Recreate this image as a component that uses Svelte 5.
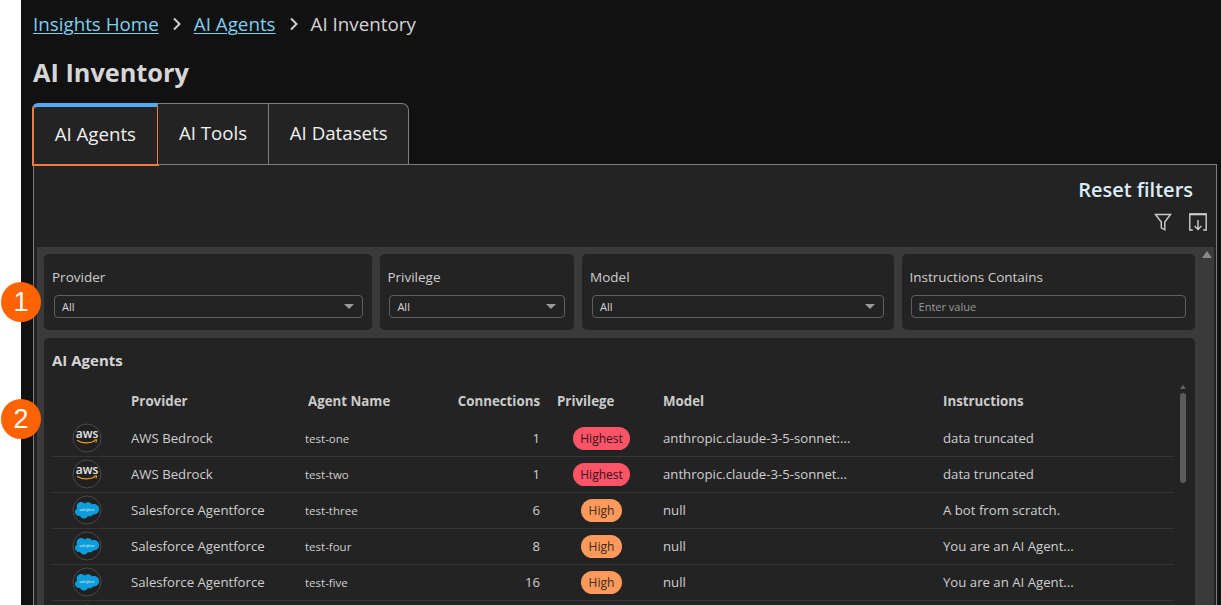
<script>
  const filters = [
    { label: 'Provider', value: 'All', cls: 'f1' },
    { label: 'Privilege', value: 'All', cls: 'f2' },
    { label: 'Model', value: 'All', cls: 'f3' }
  ];
  const rows = [
    { logo: 'aws', provider: 'AWS Bedrock', name: 'test-one', conn: 1, priv: 'Highest', model: 'anthropic.claude-3-5-sonnet:...', instr: 'data truncated' },
    { logo: 'aws', provider: 'AWS Bedrock', name: 'test-two', conn: 1, priv: 'Highest', model: 'anthropic.claude-3-5-sonnet...', instr: 'data truncated' },
    { logo: 'sf', provider: 'Salesforce Agentforce', name: 'test-three', conn: 6, priv: 'High', model: 'null', instr: 'A bot from scratch.' },
    { logo: 'sf', provider: 'Salesforce Agentforce', name: 'test-four', conn: 8, priv: 'High', model: 'null', instr: 'You are an AI Agent...' },
    { logo: 'sf', provider: 'Salesforce Agentforce', name: 'test-five', conn: 16, priv: 'High', model: 'null', instr: 'You are an AI Agent...' }
  ];
</script>

{#snippet sfLogo(label)}
  <svg viewBox="0 0 30 30" width="30" height="30">
    <circle cx="15" cy="15" r="14" fill="#202020" stroke="#4a4a4a" />
    <path d="M12.8 8.600c.9-.9 2-1.400 3.300-1.400 1.600 0 3.100.9 3.800 2.200.7-.3 1.400-.4 2.100-.4 2.900 0 5.200 2.300 5.200 5.200s-2.300 5.200-5.200 5.200h-1c-.6 1.200-1.900 2-3.300 2-.6 0-1.200-.1-1.700-.4-.7 1.500-2.200 2.600-4 2.600-1.900 0-3.500-1.200-4.100-2.800-.3.100-.6.100-.9.100-2.200 0-4-1.800-4-4 0-1.500.8-2.800 2-3.500-.3-.6-.4-1.200-.4-1.900 0-2.500 2.100-4.500 4.600-4.500 1.500 0 2.700.7 3.600 1.800z" fill="#0d9dda" />
    {#if label}<text x="15" y="15.800" text-anchor="middle" class="sft">salesforce</text>{/if}
  </svg>
{/snippet}

<div class="page">
  <span class="marker m1">1</span>
  <span class="marker m2">2</span>

  <nav class="crumbs">
    <a href="#home">Insights Home</a>
    <svg class="chev" viewBox="0 0 10 14"><path d="M2 1.500 7.500 7 2 12.500" /></svg>
    <a href="#agents">AI Agents</a>
    <svg class="chev" viewBox="0 0 10 14"><path d="M2 1.500 7.500 7 2 12.500" /></svg>
    <span>AI Inventory</span>
  </nav>

  <h1>AI Inventory</h1>

  <div class="tabs">
    <div class="tab active">AI Agents</div>
    <div class="tab t2">AI Tools</div>
    <div class="tab t3">AI Datasets</div>
  </div>

  <section class="panel">
    <div class="reset">Reset filters</div>
    <div class="tools">
      <svg viewBox="0 0 18 18" width="18" height="18" class="tool"><path d="M1.500 1.500h15L10.800 9v7.800L7.300 14.800V9z" /></svg>
      <svg viewBox="0 0 18 18" width="18" height="18" class="tool">
        <path d="M3.800 17H.8V1h16.400v16h-3" />
        <path d="M.8 1.400h16.400" stroke-width="1.800" />
        <path d="M9 7v9.300M5.600 13 9 16.400l3.400-3.400" />
      </svg>
    </div>

    <div class="well">
      <div class="scroll-up"></div>
      <div class="filters">
        {#each filters as f}
          <div class="card filter {f.cls}">
            <div class="flabel">{f.label}</div>
            <div class="select"><span>{f.value}</span><i class="caret"></i></div>
          </div>
        {/each}
        <div class="card filter f4">
          <div class="flabel">Instructions Contains</div>
          <div class="select input">Enter value</div>
        </div>
      </div>

      <div class="card table-card">
        <div class="ttitle">AI Agents</div>
        <div class="table">
          <div class="row head">
            <span></span>
            <span>Provider</span>
            <span class="c-name">Agent Name</span>
            <span class="c-conn">Connections</span>
            <span class="c-priv">Privilege</span>
            <span>Model</span>
            <span>Instructions</span>
          </div>
          {#each rows as r}
            <div class="row body">
              <span class="logo">
                {#if r.logo === 'aws'}
                  <svg viewBox="0 0 30 30" width="30" height="30">
                    <circle cx="15" cy="15" r="14" fill="#202020" stroke="#4a4a4a" />
                    <text x="15" y="15" text-anchor="middle" class="awst">aws</text>
                    <path d="M5 17.200c5.500 3.600 13.500 3.600 18.500.4" fill="none" stroke="#f09a1a" stroke-width="1.200" />
                    <path d="M21.800 17.200l3-.5-.8 2.800" fill="none" stroke="#f09a1a" stroke-width="1" />
                  </svg>
                {:else}
                  {@render sfLogo(true)}
                {/if}
              </span>
              <span>{r.provider}</span>
              <span class="name">{r.name}</span>
              <span class="c-conn">{r.conn}</span>
              <span class="pillcell"><b class={r.priv === 'Highest' ? 'pill highest' : 'pill high'}>{r.priv}</b></span>
              <span>{r.model}</span>
              <span>{r.instr}</span>
            </div>
          {/each}
          <div class="row partial"><span class="logo">{@render sfLogo(false)}</span></div>
          <div class="tscroll"><i class="tup"></i><i class="thumb"></i></div>
        </div>
      </div>
    </div>
  </section>
</div>

<style>
  :global(html), :global(body) {
    margin: 0;
    height: 605px;
    overflow: hidden;
    background: #fff;
  }
  .page {
    position: relative;
    box-sizing: border-box;
    height: 605px;
    margin-left: 21px;
    padding: 0 4px 0 12px;
    background: #111;
    color: #d8d8d8;
    font-family: "Open Sans", "Liberation Sans", sans-serif;
  }
  .marker {
    position: absolute;
    left: -20px;
    width: 40px;
    height: 40px;
    border-radius: 50%;
    background: #ff6200;
    color: #fff;
    font-family: "Liberation Sans", sans-serif;
    font-size: 27px;
    line-height: 41px;
    text-align: center;
    z-index: 5;
  }
  .m1 { top: 282px; }
  .m2 { top: 399px; }

  .crumbs {
    display: flex;
    align-items: center;
    height: 47px;
    font-size: 18.800px;
    color: #d4d4d4;
  }
  .crumbs a { color: #7fd0ee; text-decoration: underline; text-underline-offset: 2px; text-decoration-thickness: 1px; }
  .chev { width: 10px; height: 14px; margin: 0 12px 0 13px; flex: none; }
  .chev path { fill: none; stroke: #cfcfcf; stroke-width: 2; }
  h1 {
    margin: 0;
    height: 56px;
    font-size: 25.300px;
    line-height: 51px;
    font-weight: 700;
    color: #d6d6d6;
  }
  .tabs { display: flex; height: 61px; width: 377px; margin-left: -1px; position: relative; z-index: 2; }
  .tab {
    box-sizing: border-box;
    height: 61px;
    background: #232323;
    border-top: 1px solid #7d7d7d;
    border-right: 1px solid #7d7d7d;
    font-size: 18.700px;
    color: #f0f0f0;
    display: flex;
    align-items: center;
    justify-content: center;
    padding-bottom: 4px;
  }
  .active {
    width: 127px;
    height: 63px;
    border: 2px solid #f47b3f;
    border-top: 4px solid #52a9f0;
    border-top-left-radius: 6px;
    padding-bottom: 5px;
  }
  .t2 { width: 112px; margin-left: -1px; }
  .t3 { width: 140px; border-top-right-radius: 7px; }

  .panel {
    box-sizing: border-box;
    height: 441px;
    background: #232323;
    border: 1px solid #7d7d7d;
    border-bottom: 0;
    padding: 0 2px 0 3px;
    overflow: hidden;
  }
  .reset {
    text-align: right;
    font-size: 20px;
    font-weight: 600;
    color: #dcecf9;
    line-height: 25px;
    padding: 12px 21px 0 0;
    margin-bottom: -1px;
  }
  .tools { display: flex; justify-content: flex-end; gap: 17px; padding: 12px 7px 0 0; height: 33px; }
  .tool { fill: none; stroke: #cdcdcd; stroke-width: 1.400; }
  .well {
    position: relative;
    background: #3a3a3a;
    padding: 7px 19px 0 7px;
    height: 358px;
    margin-top: 1px;
    box-sizing: border-box;
  }
  .scroll-up {
    position: absolute;
    right: 2px;
    top: 4px;
    width: 0;
    height: 0;
    border-left: 5px solid transparent;
    border-right: 5px solid transparent;
    border-bottom: 7px solid #8a8a8a;
  }
  .filters { display: flex; gap: 8px; }
  .card { background: #232323; border-radius: 5px; box-sizing: border-box; }
  .filter { height: 76px; padding: 13px 9px 0 8px; }
  .f1 { width: 329px; }
  .f2 { width: 194px; padding-left: 7px; }
  .f3 { width: 312px; padding-right: 10px; }
  .f4 { width: 294px; }
  .flabel { font-size: 13.500px; line-height: 20px; color: #cfcfcf; }
  .select {
    box-sizing: border-box;
    height: 23px;
    margin: 8px 0 0 2px;
    border: 1px solid #5f5f5f;
    border-radius: 4px;
    padding: 0 8px 0 7px;
    font-size: 11px;
    color: #d8d8d8;
    display: flex;
    align-items: center;
    justify-content: space-between;
  }
  .input { color: #9a9a9a; margin-left: 1px; }
  .caret {
    width: 0;
    height: 0;
    border-left: 5px solid transparent;
    border-right: 5px solid transparent;
    border-top: 5px solid #9a9a9a;
  }
  .table-card { margin-top: 8px; height: 267px; padding: 0 20px 0 8px; position: relative; border-radius: 5px 5px 0 0; overflow: hidden; }
  .ttitle { font-size: 15px; font-weight: 700; color: #d6d6d6; line-height: 20px; padding-top: 12px; height: 32px; }
  .row {
    display: grid;
    grid-template-columns: 79px 174px 150px 85px 123px 280px 1fr;
    align-items: center;
    font-size: 13.200px;
    color: #cfcfcf;
    width: 1122px;
  }
  .head { height: 39px; padding-bottom: 1px; font-weight: 700; font-size: 13.300px; color: #cbcbcb; box-sizing: border-box; }
  .c-name { padding-left: 3px; }
  .head .c-priv { padding-left: 17px; }
  .c-conn { text-align: right; }
  .body { height: 36px; padding-bottom: 1px; border-bottom: 1px solid #353535; box-sizing: border-box; }
  .partial { padding-top: 3px; }
  .name { font-size: 11.500px; }
  .logo { display: flex; padding-left: 20px; }
  .pillcell { display: flex; justify-content: center; }
  .pill {
    font-weight: 400;
    font-size: 12px;
    line-height: 23px;
    height: 23px;
    border-radius: 12px;
  }
  .highest { background: #ff5468; padding: 0 7px; color: #33121a; }
  .high { background: #ff9a5c; padding: 0 8px; color: #3a2a20; }
  .awst { font-family: "Open Sans", sans-serif; font-size: 12px; font-weight: 600; fill: #e8e8e8; }
  .sft { font-family: "Open Sans", sans-serif; font-size: 3.400px; fill: #e8f6ff; font-style: italic; }
  .tscroll { position: absolute; right: 9px; top: 47px; width: 6px; }
  .tup {
    display: block;
    width: 0;
    height: 0;
    border-left: 3.500px solid transparent;
    border-right: 3.500px solid transparent;
    border-bottom: 4px solid #666;
  }
  .thumb { display: block; width: 6px; height: 90px; margin-top: 4px; border-radius: 3px; background: #5c5c5c; }
</style>
